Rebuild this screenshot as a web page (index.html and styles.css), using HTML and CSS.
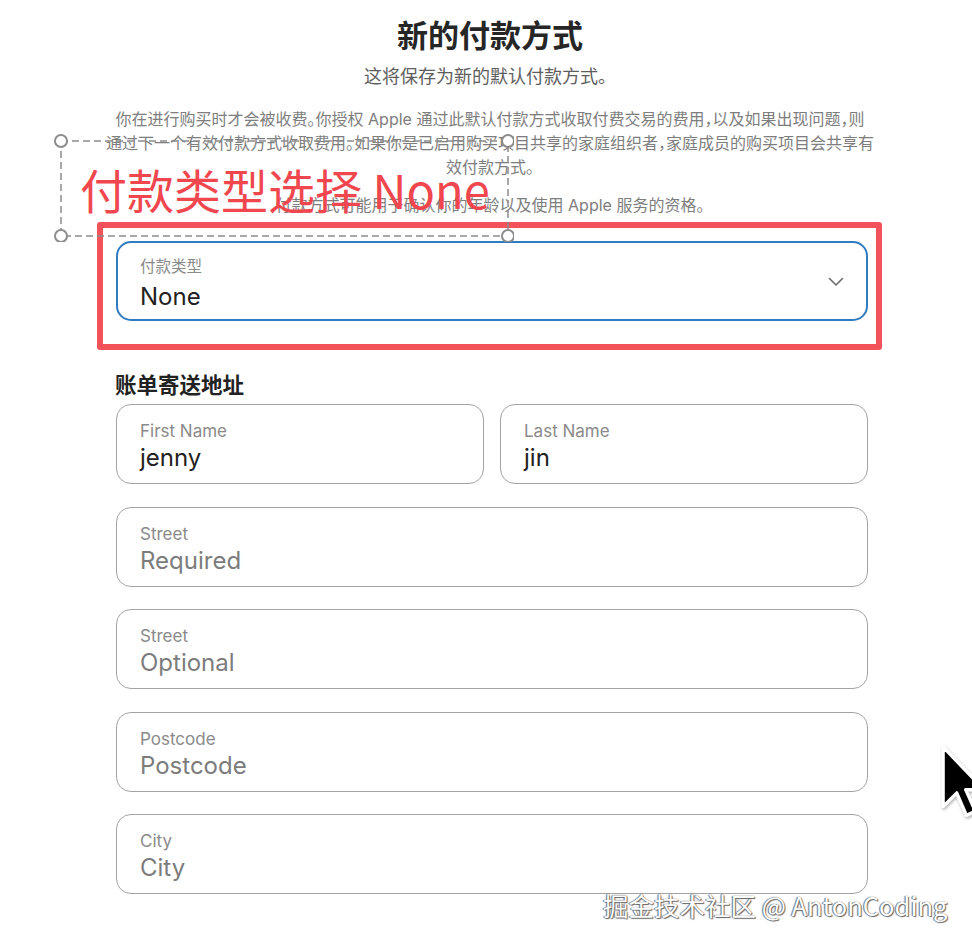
FILE: index.html
```html
<!DOCTYPE html>
<html lang="zh-CN">
<head>
    <meta charset="UTF-8">
    <meta name="viewport" content="width=device-width, initial-scale=1.0">
    <title>新的付款方式</title>
    <link rel="stylesheet" href="styles.css">
</head>
<body>
    <div class="page">
        <header class="intro">
            <h1>新的付款方式</h1>
            <p class="lead">这将保存为新的默认付款方式。</p>
            <p class="note">你在进行购买时才会被收费。你授权 Apple 通过此默认付款方式收取付费交易的费用，以及如果出现问题，则<br>通过下一个有效付款方式收取费用。如果你是已启用购买项目共享的家庭组织者，家庭成员的购买项目会共享有<br>效付款方式。</p>
            <p class="note note-last">付款方式可能用于确认你的年龄以及使用 Apple 服务的资格。</p>
        </header>

        <div class="field field-select">
            <span class="field-label">付款类型</span>
            <span class="field-value">None</span>
            <svg class="chevron" width="16" height="10" viewBox="0 0 16 10">
                <path d="M1.5 1.5 L8 8 L14.5 1.5" fill="none" stroke="#6b6b6b" stroke-width="1.6" stroke-linecap="round" stroke-linejoin="round"/>
            </svg>
        </div>

        <h2>账单寄送地址</h2>

        <div class="fields">
            <div class="row">
                <div class="field">
                    <span class="field-label">First Name</span>
                    <span class="field-value">jenny</span>
                </div>
                <div class="field">
                    <span class="field-label">Last Name</span>
                    <span class="field-value">jin</span>
                </div>
            </div>
            <div class="field">
                <span class="field-label">Street</span>
                <span class="field-value placeholder">Required</span>
            </div>
            <div class="field">
                <span class="field-label">Street</span>
                <span class="field-value placeholder">Optional</span>
            </div>
            <div class="field">
                <span class="field-label">Postcode</span>
                <span class="field-value placeholder">Postcode</span>
            </div>
            <div class="field">
                <span class="field-label">City</span>
                <span class="field-value placeholder">City</span>
            </div>
        </div>
    </div>

    <!-- annotation layer drawn over the screenshot -->
    <div class="mark-box"></div>
    <svg class="text-frame" width="460" height="108" viewBox="0 0 460 108">
        <rect x="7" y="7" width="447" height="95" fill="none" stroke="#8c8c8c" stroke-width="1.5" stroke-dasharray="7 4"/>
        <circle cx="7" cy="7" r="6" fill="#fff" stroke="#8c8c8c" stroke-width="2"/>
        <circle cx="454" cy="7" r="6" fill="#fff" stroke="#8c8c8c" stroke-width="2"/>
        <circle cx="7" cy="102" r="6" fill="#fff" stroke="#8c8c8c" stroke-width="2"/>
        <circle cx="454" cy="102" r="6" fill="#fff" stroke="#8c8c8c" stroke-width="2"/>
    </svg>
    <div class="mark-text">付款类型选择 None</div>

    <svg class="cursor" width="40" height="100" viewBox="0 0 40 100">
        <defs>
            <filter id="shadow" x="-50%" y="-50%" width="200%" height="200%">
                <feDropShadow dx="1" dy="2" stdDeviation="2" flood-color="#000" flood-opacity="0.35"/>
            </filter>
        </defs>
        <path d="M4 4 L4 78 L21 61 L33 89 L44 84 L32 57 L55 57 Z" fill="#000" stroke="#fff" stroke-width="4" stroke-linejoin="round" filter="url(#shadow)"/>
    </svg>

    <div class="watermark">掘金技术社区 @ AntonCoding</div>
</body>
</html>
```

FILE: styles.css
```css
* {
    margin: 0;
    padding: 0;
    box-sizing: border-box;
}

html, body {
    height: 100%;
    overflow: hidden;
}

body {
    position: relative;
    background: #fff;
    font-family: Inter, 'Noto Sans CJK SC', sans-serif;
    color: #1d1d1f;
}

.page {
    width: 752px;
    margin-left: 116px;
}

.intro {
    padding-top: 15px;
    text-align: center;
    margin-left: -30px;
    margin-right: -26px;
}

h1 {
    font-size: 31px;
    line-height: 42px;
    font-weight: 700;
    color: #262626;
}

.lead {
    margin-top: 8px;
    font-size: 18px;
    line-height: 24px;
    color: #5e5e5e;
}

.note {
    margin-top: 18px;
    font-size: 16px;
    line-height: 24px;
    color: #7e7e7e;
    font-feature-settings: "halt";
}

.note-last {
    margin-top: 14px;
}

.field {
    position: relative;
    display: flex;
    flex-direction: column;
    height: 80px;
    padding: 16px 23px 0;
    border: 1px solid #a3a3a3;
    border-radius: 15px;
}

.field-label {
    font-size: 17px;
    line-height: 21px;
    color: #8a8a8a;
}

.field-value {
    margin-top: 1px;
    font-size: 24px;
    line-height: 30px;
    color: #222;
}

.placeholder {
    color: #7c7c7c;
}

.field-select {
    margin-top: 24px;
    padding: 14px 22px 0;
    border: 2px solid #2f7cc2;
}

.field-select .field-label {
    font-size: 15.5px;
    line-height: 20px;
}

.field-select .field-value {
    margin-top: 5px;
}

.chevron {
    position: absolute;
    right: 22px;
    top: 34px;
}

h2 {
    margin-top: 50px;
    font-size: 21.5px;
    line-height: 28px;
    font-weight: 600;
    color: #222;
    margin-left: -1px;
}

.fields {
    margin-top: 5px;
    display: flex;
    flex-direction: column;
    gap: 22.5px;
}

.row {
    display: grid;
    grid-template-columns: 1fr 1fr;
    gap: 16px;
}

/* annotation overlay */
.mark-box {
    position: absolute;
    left: 97px;
    top: 222px;
    width: 785px;
    height: 128px;
    border: 6px solid #f4525a;
    border-radius: 3px;
}

.text-frame {
    position: absolute;
    left: 54px;
    top: 134px;
}

.mark-text {
    position: absolute;
    left: 80px;
    top: 159px;
    font-family: 'Noto Sans CJK SC', sans-serif;
    font-size: 47px;
    line-height: 60px;
    color: #f0474e;
    white-space: nowrap;
}

.cursor {
    position: absolute;
    left: 940px;
    top: 734px;
    width: 32px;
    overflow: hidden;
}

.watermark {
    position: absolute;
    left: 603px;
    top: 888px;
    font-family: 'Noto Sans CJK SC', sans-serif;
    font-size: 25.5px;
    line-height: 34px;
    color: #fff;
    white-space: nowrap;
    text-shadow: 0 0 1px #555, 1px 1px 1px #666, -1px 0 1px #777;
}
```
